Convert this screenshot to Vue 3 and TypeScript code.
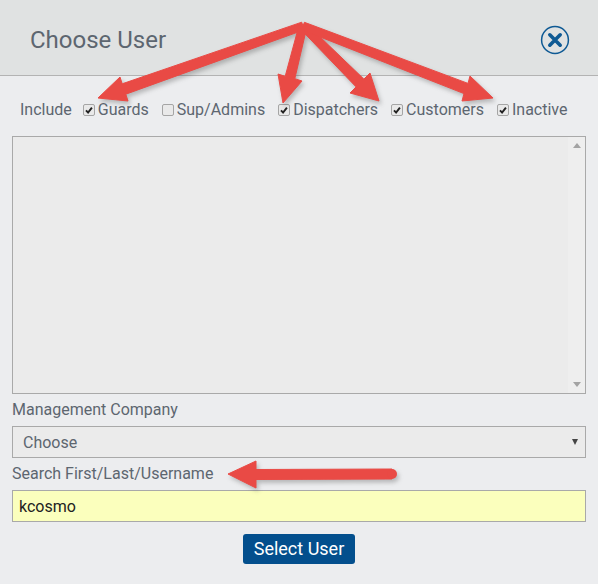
<template>
  <div class="dialog">
    <header class="dialog-head">
      <h1>Choose User</h1>
      <button class="close" type="button" aria-label="Close">
        <svg viewBox="0 0 30 30" width="30" height="30" fill="none" stroke="#0f5a94">
          <circle cx="15" cy="15" r="13.4" stroke-width="1.5" />
          <path d="M9.8 9.8l10.4 10.4M20.2 9.8L9.8 20.2" stroke-width="3.6" stroke-linecap="round" />
        </svg>
      </button>
    </header>

    <main class="dialog-body">
      <div class="include">
        <span class="include-label">Include</span>
        <label v-for="opt in options" :key="opt.name" class="opt">
          <span class="box">
            <svg v-if="opt.checked" viewBox="0 0 12 12" width="12" height="12">
              <path d="M2.4 6.4l2.5 2.7 4.6-6" fill="none" stroke="#222" stroke-width="2.3" />
            </svg>
          </span>
          {{ opt.name }}
        </label>
      </div>

      <div class="listbox">
        <div class="scroll">
          <span class="tri up"></span>
          <span class="tri down"></span>
        </div>
      </div>

      <label class="field-label">Management Company</label>
      <div class="select">
        <span>Choose</span>
        <span class="tri dark"></span>
      </div>

      <label class="field-label">Search First/Last/Username</label>
      <div class="input">kcosmo</div>

      <div class="actions">
        <button class="primary" type="button">Select User</button>
      </div>
    </main>

    <svg class="arrows" viewBox="0 0 598 584" width="598" height="584">
      <polygon v-for="(a, i) in arrows" :key="i" :points="a" fill="#e94a45" stroke="#e94a45" stroke-width="1" stroke-linejoin="round" />
      <circle cx="392" cy="474" r="5" fill="#e94a45" />
    </svg>
  </div>
</template>

<script setup lang="ts">
const options = [
  { name: 'Guards', checked: true },
  { name: 'Sup/Admins', checked: false },
  { name: 'Dispatchers', checked: true },
  { name: 'Customers', checked: true },
  { name: 'Inactive', checked: true }
]

type Pt = [number, number]

// tapered shaft from start to the middle of the head base, then the head itself
function arrow(start: Pt, tip: Pt, c1: Pt, c2: Pt, w0 = 8, w1 = 11): string {
  const base: Pt = [(c1[0] + c2[0]) / 2, (c1[1] + c2[1]) / 2]
  const len = Math.hypot(base[0] - start[0], base[1] - start[1])
  const nx = -(base[1] - start[1]) / len
  const ny = (base[0] - start[0]) / len
  // make sure c1 sits on the +normal side so the outline doesn't cross itself
  const side = (c1[0] - base[0]) * nx + (c1[1] - base[1]) * ny > 0 ? 1 : -1
  const pts: Pt[] = [
    [start[0] + side * nx * w0 * 0.5, start[1] + side * ny * w0 * 0.5],
    [base[0] + side * nx * w1 * 0.5, base[1] + side * ny * w1 * 0.5],
    c1,
    tip,
    c2,
    [base[0] - side * nx * w1 * 0.5, base[1] - side * ny * w1 * 0.5],
    [start[0] - side * nx * w0 * 0.5, start[1] - side * ny * w0 * 0.5]
  ]
  return pts.map((p) => p.map((v) => v.toFixed(1)).join(',')).join(' ')
}

const arrows = [
  arrow([303, 26], [98, 98], [120, 77], [128, 101]),
  arrow([303, 26], [283, 103], [278, 74], [302, 81], 8, 10),
  arrow([303, 26], [379, 101], [370, 73], [350, 93]),
  arrow([303, 26], [493, 98], [470, 76], [462, 101]),
  arrow([392, 474], [228, 474], [256, 461], [256, 488], 10, 10)
]
</script>

<style>
html,
body {
  margin: 0;
  background: #ecedef;
}
</style>

<style scoped>
.dialog {
  position: relative;
  width: 598px;
  height: 584px;
  overflow: hidden;
  background: #ecedef;
  font-family: Roboto, "Liberation Sans", sans-serif;
  color: #5d6670;
}

.dialog-head {
  display: flex;
  align-items: center;
  justify-content: space-between;
  box-sizing: border-box;
  height: 76px;
  padding: 4px 28px 0 30px;
  background: #e0e2e2;
  border-bottom: 1px solid #b3b3b3;
}

h1 {
  margin: 0;
  font-size: 24px;
  font-weight: 400;
}

.close {
  display: flex;
  padding: 0;
  border: 0;
  background: none;
}

.dialog-body {
  padding: 0 12px;
}

.include {
  display: flex;
  align-items: center;
  gap: 13px;
  box-sizing: border-box;
  height: 60px;
  padding: 7px 0 0 8px;
  font-size: 16px;
}

.include-label {
  margin-right: -2px;
}

.opt {
  display: inline-flex;
  align-items: center;
  gap: 3px;
}

.box {
  display: inline-flex;
  box-sizing: border-box;
  width: 12px;
  height: 12px;
  margin-top: 1px;
  border: 1px solid #a5a5a5;
  border-radius: 2px;
  background: #e9e9e9;
  align-items: center;
  justify-content: center;
}

.listbox {
  box-sizing: border-box;
  height: 258px;
  border: 1px solid #a9a9a9;
  background: #ebebeb;
  display: flex;
  justify-content: flex-end;
}

.scroll {
  width: 17px;
  background: #eeeeee;
  display: flex;
  flex-direction: column;
  justify-content: space-between;
  align-items: center;
  padding: 6px 0;
}

.tri {
  width: 0;
  height: 0;
  border-left: 4px solid transparent;
  border-right: 4px solid transparent;
}

.up { border-bottom: 5px solid #a3a3a3; }
.down { border-top: 5px solid #a3a3a3; }
.dark {
  border-left-width: 3.5px;
  border-right-width: 3.5px;
  border-top: 6px solid #444;
  margin-right: 7px;
}

.field-label {
  display: block;
  margin-top: 6px;
  font-size: 16px;
  line-height: 19px;
}

.select {
  box-sizing: border-box;
  display: flex;
  align-items: center;
  justify-content: space-between;
  height: 32px;
  margin-top: 7px;
  padding-left: 10px;
  border: 1px solid #a9a9a9;
  background: #ebebeb;
  font-size: 16px;
}

.input {
  box-sizing: border-box;
  display: flex;
  align-items: center;
  height: 32px;
  margin-top: 7px;
  padding-left: 6px;
  border: 1px solid #a9a9a9;
  background: #fbffbd;
  color: #222;
  font-size: 16px;
}

.actions {
  display: flex;
  justify-content: center;
  margin-top: 12px;
}

.primary {
  width: 112px;
  height: 30px;
  padding: 0 0 1px;
  border: 0;
  border-radius: 3px;
  background: #034f8d;
  color: #fff;
  font-family: inherit;
  font-size: 18px;
}

.arrows {
  position: absolute;
  left: 0;
  top: 0;
  pointer-events: none;
  filter: drop-shadow(2px 3px 2px rgba(60, 60, 60, 0.3));
}
</style>
